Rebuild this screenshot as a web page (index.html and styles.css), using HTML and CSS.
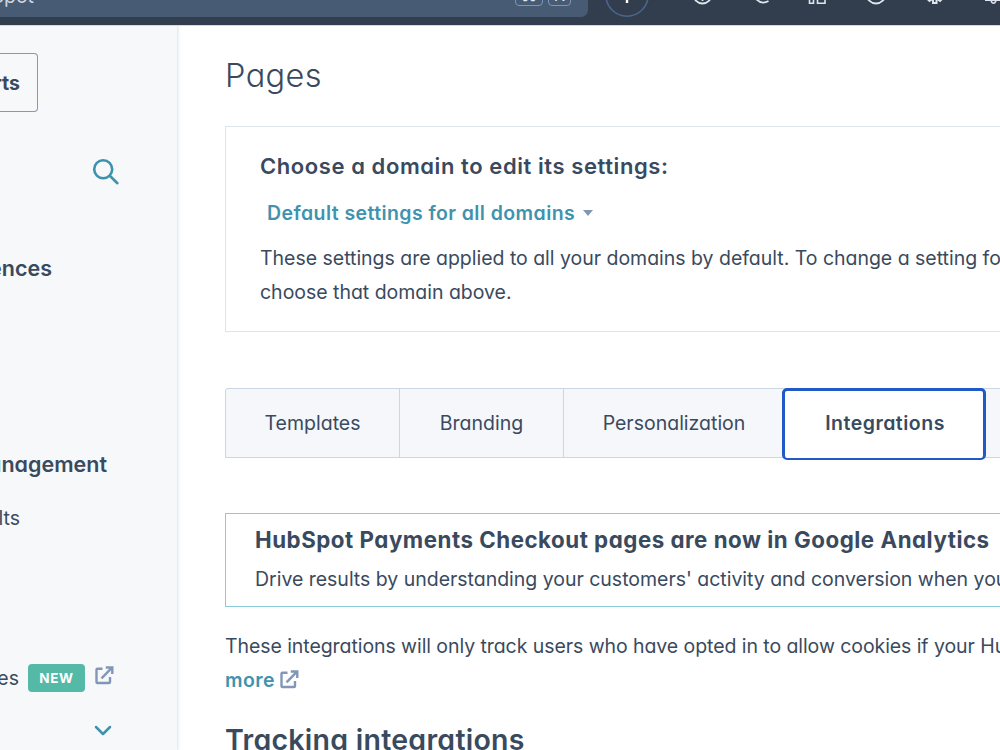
FILE: index.html
```html
<!DOCTYPE html>
<html lang="en">

<head>
    <meta charset="UTF-8">
    <meta name="viewport" content="width=device-width, initial-scale=1.0">
    <title>Pages</title>
    <link rel="stylesheet" href="styles.css">
</head>

<body>
    <header class="topbar">
        <div class="search-box">
            <span class="search-text">Search HubSpot</span>
            <span class="keys"><kbd class="wide">⌘</kbd><kbd>K</kbd></span>
        </div>
        <div class="add-button">
            <svg width="44" height="44" viewBox="0 0 44 44">
                <circle cx="22" cy="22" r="21.2" fill="none" stroke="#4c658c" stroke-width="1.5" />
                <path d="M22 11V30M13 20.5H31" stroke="#fff" stroke-width="2.4" />
            </svg>
        </div>
        <svg class="nav-icons" width="350" height="25" viewBox="650 0 350 25" fill="none" stroke="#dfe5ec" stroke-width="1.8">
            <circle cx="702.5" cy="-5.5" r="9" />
            <path d="M702.5 -5V1" />
            <path d="M756 -1Q762 5 768.5 1" />
            <path d="M809.5 -10V3.300H813.500V-10M817.500 -3V3.300H825V-10" stroke-width="1.6" />
            <circle cx="876" cy="-6" r="9.5" />
            <path d="M927.500 -1L929.500 1L931.500 -.5L933 0V3H936.500V0L938 -.5L940 1L942 -1" stroke-width="2" />
            <path d="M985 .3H1000M991 1Q993.500 5.500 996 1" stroke-width="1.6" />
        </svg>
    </header>

    <div class="layout">
        <aside class="sidebar">
            <div class="side-button"><span>rts</span></div>
            <svg class="side-search" width="28" height="28" viewBox="0 0 28 28" fill="none" stroke="#3d93ae" stroke-width="2.6" stroke-linecap="round">
                <circle cx="11.2" cy="11.2" r="9" />
                <path d="M17.800 17.800L25.400 25.200" />
            </svg>
            <div class="side-row heading prefs"><span>Preferences</span></div>
            <div class="side-row heading account"><span>Account Management</span></div>
            <div class="side-row defaults"><span>Account Defaults</span></div>
            <div class="side-row new-row">
                <span>es</span>
                <b class="badge">NEW</b>
                <svg class="external" width="19" height="19" viewBox="0 0 19 19" fill="none" stroke="#8197b8" stroke-width="2.4">
                    <path d="M7.500 2.800H2.500Q1.500 2.800 1.500 3.800V16Q1.500 17 2.500 17H14Q15 17 15 16V11M6.500 12.300L16.500 2.200M10.800 1.500H17.300V8" />
                </svg>
            </div>
            <svg class="chevron" width="18" height="12" viewBox="0 0 18 12" fill="none" stroke="#3d93ae" stroke-width="2.5" stroke-linecap="round" stroke-linejoin="round">
                <path d="M2 2L9 9L16 2" />
            </svg>
        </aside>

        <main class="content">
            <h1>Pages</h1>

            <section class="domain-box">
                <h2>Choose a domain to edit its settings:</h2>
                <a class="domain-select">Default settings for all domains<i class="caret"></i></a>
                <p>These settings are applied to all your domains by default. To change a setting for<br>choose that domain above.</p>
            </section>

            <nav class="tabs">
                <div class="tab">Templates</div>
                <div class="tab">Branding</div>
                <div class="tab">Personalization</div>
                <div class="tab active">Integrations</div>
                <div class="tab"></div>
            </nav>

            <section class="notice">
                <h3>HubSpot Payments Checkout pages are now in Google Analytics</h3>
                <p>Drive results by understanding your customers' activity and conversion when you</p>
            </section>

            <p class="cookies">These integrations will only track users who have opted in to allow cookies if your HubSpot<br>
                <a>more</a>
                <svg class="external" width="19" height="19" viewBox="0 0 19 19" fill="none" stroke="#8197b8" stroke-width="2.4">
                    <path d="M7.500 2.800H2.500Q1.500 2.800 1.500 3.800V16Q1.500 17 2.500 17H14Q15 17 15 16V11M6.500 12.300L16.500 2.200M10.800 1.500H17.300V8" />
                </svg>
            </p>

            <h2 class="tracking">Tracking integrations</h2>
        </main>
    </div>
</body>

</html>
```
FILE: styles.css
```css
* {
    box-sizing: border-box;
}

body {
    margin: 0;
    width: 1000px;
    height: 750px;
    overflow: hidden;
    font-family: Inter, "Open Sans", sans-serif;
    font-feature-settings: "cv11";
    font-size: 19.5px;
    color: #3a4a5e;
    background: #fff;
}

h1, h2, h3, p {
    margin: 0;
}

.topbar {
    display: flex;
    align-items: flex-end;
    height: 25px;
    overflow: hidden;
    background: #323e4e;
}

.search-box {
    display: flex;
    justify-content: space-between;
    align-items: flex-end;
    width: 588px;
    height: 50px;
    flex: none;
    margin-bottom: 8px;
    padding: 0 17px 11px 0;
    border-radius: 0 7px 7px 0;
    background: #475b74;
}

.search-text {
    width: 34px;
    display: flex;
    justify-content: flex-end;
    white-space: nowrap;
    line-height: 20px;
    color: #cdd5df;
}

.keys {
    display: flex;
    gap: 5px;
}

.keys kbd {
    height: 24px;
    width: 23px;
    border: 1.5px solid #7f95b2;
    border-radius: 4px;
    font: 17px/24px Inter, sans-serif;
    color: #dfe5ec;
    text-align: center;
}

.keys .wide {
    width: 28px;
}

.add-button {
    flex: none;
    margin: 0 1px 8px 17px;
    height: 44px;
}

.nav-icons {
    flex: none;
}

.layout {
    display: flex;
    height: 725px;
    border-top: 1px solid #d3dae2;
    overflow: hidden;
}

.sidebar {
    flex: none;
    width: 177px;
    background: #f6f8fa;
    box-shadow: 0 0 3px 1px #d9e1e9;
    overflow: hidden;
}

.side-button {
    display: flex;
    justify-content: flex-end;
    width: 38px;
    height: 59px;
    margin-top: 27px;
    padding-right: 17px;
    border: 1px solid #8199bd;
    border-left: 0;
    border-radius: 0 4px 4px 0;
    line-height: 58px;
    font-weight: 650;
}

.side-search {
    display: block;
    margin: 46px 0 0 92px;
}

.side-row {
    display: flex;
    justify-content: flex-end;
    align-items: center;
    height: 28px;
    white-space: nowrap;
}

.heading {
    font-size: 21.5px;
    font-weight: 620;
}

.prefs {
    width: 52px;
    margin-top: 68px;
}

.account {
    width: 107px;
    margin-top: 168px;
}

.defaults {
    width: 20px;
    margin-top: 26px;
}

.new-row {
    width: 114px;
    margin-top: 132px;
}

.badge {
    flex: none;
    margin: 0 10px 0 9px;
    width: 57px;
    height: 28px;
    border-radius: 4px;
    background: #54b9a6;
    color: #fff;
    font-size: 13.5px;
    font-weight: 700;
    line-height: 28px;
    letter-spacing: 0.6px;
    text-align: center;
}

.external {
    flex: none;
}

.new-row .external {
    margin-bottom: 5px;
}

.chevron {
    display: block;
    margin: 33px 0 0 94px;
}

.content {
    flex: none;
    width: 900px;
    padding: 26px 0 0 48px;
    white-space: nowrap;
}

h1 {
    font-size: 32.5px;
    font-weight: 330;
    line-height: 48px;
    letter-spacing: 0.4px;
}

.domain-box {
    height: 206px;
    margin-top: 26px;
    padding: 23px 34px;
    border: 1px solid #dde4ec;
}

.domain-box h2 {
    font-size: 22px;
    font-weight: 640;
    line-height: 32px;
    letter-spacing: 0.58px;
}

.domain-select {
    display: flex;
    align-items: center;
    gap: 8px;
    height: 30px;
    margin: 16px 0 14px 7px;
    font-weight: 640;
    letter-spacing: 0.42px;
    color: #3f93ae;
}

.caret {
    border: 5.5px solid transparent;
    border-top: 6px solid #8197b8;
    border-bottom: 0;
}

p {
    font-weight: 390;
    line-height: 33.5px;
    letter-spacing: -0.02px;
}

.tabs {
    display: flex;
    height: 70px;
    margin-top: 56px;
    border: 1px solid #cbd6e2;
    border-radius: 3px 0 0 0;
    background: #f5f7fa;
}

.tab {
    flex: none;
    width: 164px;
    border-right: 1px solid #cbd6e2;
    font-weight: 390;
    line-height: 68px;
    text-align: center;
}

.tab:first-child {
    width: 174px;
}

.tab:nth-child(3) {
    width: 218px;
    padding-left: 2px;
    border: 0;
}

.tab.active {
    width: 204px;
    height: 72px;
    margin-top: -1px;
    padding-left: 2px;
    border: 3px solid #2159c7;
    border-bottom-width: 2px;
    border-radius: 5px;
    background: #fff;
    font-weight: 640;
    line-height: 65px;
    letter-spacing: 0.5px;
}

.notice {
    height: 94px;
    margin-top: 55px;
    padding: 10px 29px;
    border: 1px solid #8ccbda;
}

.notice h3 {
    font-size: 22.3px;
    font-weight: 700;
    line-height: 32px;
    letter-spacing: 0.52px;
}

.notice p {
    margin-top: 7px;
}

.cookies {
    margin-top: 23px;
    letter-spacing: -0.07px;
}

.cookies a {
    font-weight: 640;
    letter-spacing: 0.42px;
    color: #3f93ae;
}

.cookies .external {
    vertical-align: -2px;
}

.tracking {
    margin-top: 24px;
    font-size: 28.5px;
    font-weight: 640;
    line-height: 38px;
    letter-spacing: 0.26px;
}
```
